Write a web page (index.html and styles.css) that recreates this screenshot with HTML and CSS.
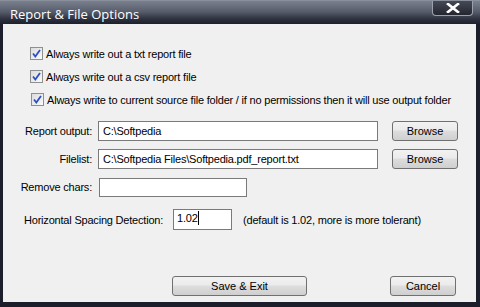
FILE: index.html
```html
<!DOCTYPE html>
<html lang="en">
<head>
  <meta charset="UTF-8">
  <title>Report &amp; File Options</title>
  <link rel="stylesheet" href="styles.css">
</head>
<body>
  <div class="window">
    <div class="titlebar">
      <span class="title">Report &amp; File Options</span>
      <button class="close-btn">
        <svg width="16" height="10" viewBox="0 0 16 10">
          <path d="M3 1 L13 9 M13 1 L3 9" stroke="#fff" stroke-width="2.6" stroke-linecap="square"/>
        </svg>
      </button>
    </div>
    <div class="client">
      <div class="checks">
        <label class="check"><span class="box"><svg width="11" height="11" viewBox="0 0 11 11"><path d="M2 5.5 L4.3 8.5 L9 2" fill="none" stroke="#2d4fc4" stroke-width="1.8"/></svg></span>Always write out a txt report file</label>
        <label class="check"><span class="box"><svg width="11" height="11" viewBox="0 0 11 11"><path d="M2 5.5 L4.3 8.5 L9 2" fill="none" stroke="#2d4fc4" stroke-width="1.8"/></svg></span>Always write out a csv report file</label>
        <label class="check third"><span class="box"><svg width="11" height="11" viewBox="0 0 11 11"><path d="M2 5.5 L4.3 8.5 L9 2" fill="none" stroke="#2d4fc4" stroke-width="1.8"/></svg></span>Always write to current source file folder / if no permissions then it will use output folder</label>
      </div>

      <div class="field">
        <span class="label">Report output:</span>
        <div class="input wide">C:\Softpedia</div>
        <button class="btn browse">Browse</button>
      </div>
      <div class="field">
        <span class="label">Filelist:</span>
        <div class="input wide">C:\Softpedia Files\Softpedia.pdf_report.txt</div>
        <button class="btn browse">Browse</button>
      </div>
      <div class="field">
        <span class="label">Remove chars:</span>
        <div class="input short"></div>
      </div>

      <div class="spacing">
        <span class="spacing-label">Horizontal Spacing Detection:</span>
        <div class="input tiny">1.02<span class="caret"></span></div>
        <span class="hint">(default is 1.02, more is more tolerant)</span>
      </div>

      <div class="actions">
        <button class="btn save">Save &amp; Exit</button>
        <button class="btn browse">Cancel</button>
      </div>
    </div>
  </div>
</body>
</html>
```

FILE: styles.css
```css
body {
  margin: 0;
  font-family: "Liberation Sans", Arial, sans-serif;
  font-size: 11px;
  letter-spacing: -0.2px;
  color: #000;
}
.window {
  width: 480px;
  height: 307px;
  display: flex;
  flex-direction: column;
  background: #1c1e2b;
  box-sizing: border-box;
  border-top: 1px solid #8a8f9c;
}
.titlebar {
  height: 23px;
  display: flex;
  align-items: flex-start;
  justify-content: space-between;
  background: linear-gradient(#7a7f8d, #595e6d 45%, #2c2f3d 80%, #1d1f2c);
}
.title {
  color: #fff;
  font-family: "Open Sans", "Noto Sans", sans-serif;
  font-size: 13px;
  letter-spacing: 0;
  margin: 4px 0 0 10px;
  line-height: 18px;
}
.close-btn {
  width: 41px;
  height: 15px;
  margin: 0 7px 0 0;
  padding: 0;
  border: 1px solid #9ba0ad;
  border-top: none;
  border-radius: 0 0 4px 4px;
  background: linear-gradient(#454957, #24262f);
  display: flex;
  align-items: center;
  justify-content: center;
}
.client {
  flex: 1;
  background: #f0f0f0;
  margin: 0 4px 5px 3px;
  padding: 23px 0 0 27px;
}
.checks {
  display: flex;
  flex-direction: column;
  gap: 10px;
}
.check {
  display: flex;
  align-items: center;
  height: 13px;
  gap: 3px;
}
.check.third {
  margin-left: 1px;
}
.box {
  width: 11px;
  height: 11px;
  border: 1px solid #8e8f8f;
  background: linear-gradient(135deg, #dcdcdc, #fafafa);
  display: flex;
}
.field {
  display: flex;
  align-items: center;
  height: 20px;
  margin-top: 8px;
}
.checks + .field {
  margin-top: 15px;
}
.label {
  width: 72px;
  text-align: right;
  margin-right: 6px;
  margin-left: -10px;
  white-space: nowrap;
}
.input {
  height: 18px;
  box-sizing: content-box;
  border: 1px solid #7a7a7a;
  background: #fff;
  padding: 0 4px;
  line-height: 18px;
  white-space: nowrap;
  overflow: hidden;
}
.input.wide {
  width: 270px;
}
.input.short {
  width: 138px;
  margin-left: 1px;
  height: 17px;
}
.input.tiny {
  width: 51px;
  height: 19px;
  padding: 0 3px;
  line-height: 17px;
}
.caret {
  display: inline-block;
  width: 1px;
  height: 14px;
  background: #000;
  vertical-align: -3px;
}
.btn {
  font-family: "Liberation Sans", Arial, sans-serif;
  font-size: 11px;
  color: #000;
  height: 20px;
  border: 1px solid #707070;
  border-radius: 3px;
  background: linear-gradient(#f2f2f2, #ebebeb 45%, #dddddd 50%, #cfcfcf);
  padding: 0;
}
.browse {
  width: 66px;
  margin-left: 14px;
}
.spacing {
  display: flex;
  align-items: center;
  margin: 12px 0 0 -6px;
  height: 21px;
}
.spacing-label {
  width: 149px;
}
.hint {
  margin-left: 11px;
}
.actions {
  display: flex;
  margin: 46px 0 0 142px;
}
.save {
  width: 135px;
}
.actions .browse {
  margin-left: 83px;
}
```
